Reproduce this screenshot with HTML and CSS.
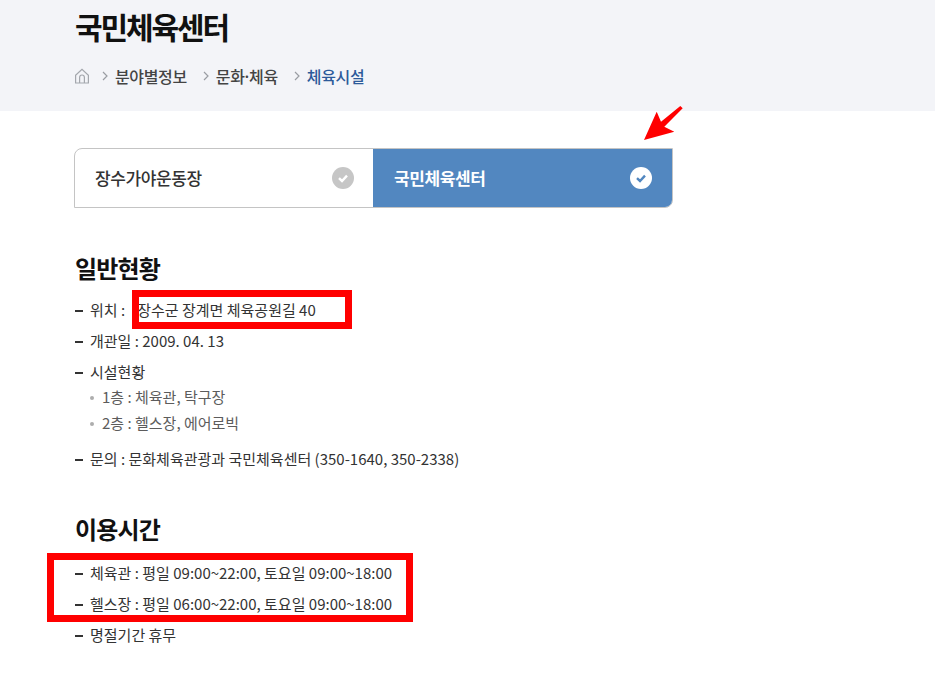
FILE: index.html
```html
<!DOCTYPE html>
<html lang="ko">
<head>
<meta charset="utf-8">
<title>국민체육센터</title>
<link rel="stylesheet" href="styles.css">
</head>
<body>
<header class="top">
  <div class="wrap">
    <h1 class="title">국민체육센터</h1>
    <nav class="crumbs">
      <svg class="home" width="16" height="16" viewBox="0 0 16 16" fill="none" stroke="#a4a7ad" stroke-width="1.2"><path d="M1.6 7.2 8 1.4l6.4 5.8V15H1.6z"/><path d="M5.6 15V9.4a2.4 2.4 0 0 1 4.8 0V15"/></svg>
      <svg class="sep" width="6" height="10" viewBox="0 0 6 10" fill="none" stroke="#9a9da3" stroke-width="1.2"><path d="m1 1 4 4-4 4"/></svg>
      <span class="crumb">분야별정보</span>
      <svg class="sep" width="6" height="10" viewBox="0 0 6 10" fill="none" stroke="#9a9da3" stroke-width="1.2"><path d="m1 1 4 4-4 4"/></svg>
      <span class="crumb">문화·체육</span>
      <svg class="sep" width="6" height="10" viewBox="0 0 6 10" fill="none" stroke="#9a9da3" stroke-width="1.2"><path d="m1 1 4 4-4 4"/></svg>
      <span class="crumb current">체육시설</span>
    </nav>
  </div>
</header>
<main class="wrap content">
  <div class="tabs">
    <div class="tab">
      <span>장수가야운동장</span>
      <svg width="22" height="22" viewBox="0 0 22 22"><circle cx="11" cy="11" r="11" fill="#c6c6c6"/><path d="m7 11.2 3 2.8 5-5.4" fill="none" stroke="#fff" stroke-width="2.4"/></svg>
    </div>
    <div class="tab active">
      <span>국민체육센터</span>
      <svg width="22" height="22" viewBox="0 0 22 22"><circle cx="11" cy="11" r="11" fill="#fff"/><path d="m7 11.2 3 2.8 5-5.4" fill="none" stroke="#5287c0" stroke-width="2.4"/></svg>
    </div>
  </div>

  <h2 class="heading">일반현황</h2>
  <ul class="list">
    <li class="item">위치 : &nbsp;&nbsp;<span class="address">장수군 장계면 체육공원길 40</span></li>
    <li class="item">개관일 : 2009. 04. 13</li>
    <li class="item">시설현황
      <ul class="sublist">
        <li class="subitem">1층 : 체육관, 탁구장</li>
        <li class="subitem">2층 : 헬스장, 에어로빅</li>
      </ul>
    </li>
    <li class="item">문의 : 문화체육관광과 국민체육센터 (350-1640, 350-2338)</li>
  </ul>

  <h2 class="heading second">이용시간</h2>
  <ul class="list list-hours">
    <li class="item">체육관 : 평일 09:00~22:00, 토요일 09:00~18:00</li>
    <li class="item">헬스장 : 평일 06:00~22:00, 토요일 09:00~18:00</li>
    <li class="item">명절기간 휴무</li>
  </ul>
</main>
<div class="mark mark-address"></div>
<div class="mark mark-hours"></div>
<svg class="arrow" width="42" height="38" viewBox="0 0 42 38"><path fill="#f00" d="M2 35 14.7 6.7l4.3 10L38.3 1l2.4 2.3-18.4 18.4 10 5z"/></svg>
</body>
</html>
```
FILE: styles.css
```css
* { box-sizing: border-box; }
html, body { margin: 0; padding: 0; }
body {
  position: relative;
  background: #fff;
  color: #333;
  font-family: "Noto Sans CJK KR", "Noto Sans", sans-serif;
  font-size: 15px;
  overflow: hidden;
  height: 673px;
}
ul { list-style: none; margin: 0; padding: 0; }
.wrap { margin-left: 74px; width: 599px; }
.top { background: #f3f4f8; height: 111px; }
.title {
  margin: 0;
  padding: 6px 0 0 1px;
  font-size: 30px;
  line-height: 40px;
  font-weight: 700;
  letter-spacing: -2.1px;
  color: #111;
}
.crumbs { display: flex; align-items: center; margin-top: 18px; height: 24px; }
.home { margin-right: 12px; }
.sep { margin-right: 7px; }
.crumb { font-size: 16px; font-weight: 500; color: #444; margin-right: 16px; letter-spacing: -0.35px; }
.crumb.current { color: #2c5a9a; margin-right: 0; }
.content { padding-top: 37px; }
.tabs {
  display: flex;
  height: 60px;
  border: 1px solid #c4c4c4;
  border-radius: 8px 0 8px 0;
  overflow: hidden;
}
.tab {
  flex: 1;
  display: flex;
  align-items: center;
  justify-content: space-between;
  padding: 0 20px;
  font-size: 17px;
  font-weight: 500;
  letter-spacing: -0.4px;
  color: #333;
}
.tab span { position: relative; top: -1px; }
.tab:first-child { flex: 0 0 298px; padding-right: 19px; }
.tab.active { background: #5287c0; color: #fff; font-weight: 700; padding-left: 21px; }
.heading {
  margin: 40px 0 0;
  padding-left: 1px;
  font-size: 24px;
  line-height: 40px;
  font-weight: 700;
  letter-spacing: -0.8px;
  color: #111;
}
.heading.second { margin-top: 35px; }
.list { margin-top: 6px; }
.list-hours { margin-top: 8px; }
.item {
  display: block;
  position: relative;
  padding-left: 16px;
  line-height: 31px;
  font-size: 15px;
  letter-spacing: 0;
  font-feature-settings: "locl" 0, "calt" 0, "ccmp" 0, "kern" 0;
}
.address { margin-left: 2px; }
.item::before {
  content: "";
  position: absolute;
  left: 1px;
  top: 16px;
  width: 8px;
  height: 2px;
  background: #333;
}
.sublist { padding-bottom: 7px; margin-top: -3px; }
.subitem {
  position: relative;
  padding-left: 12px;
  line-height: 26px;
  color: #5c5c5c;
}
.subitem::before {
  content: "";
  position: absolute;
  left: 0;
  top: 12px;
  width: 4px;
  height: 4px;
  border-radius: 50%;
  background: #adadad;
}
.mark { position: absolute; border: 7px solid #f00; }
.mark-address { left: 132px; top: 290px; width: 220px; height: 39px; }
.mark-hours { left: 47px; top: 553px; width: 366px; height: 69px; }
.arrow { position: absolute; left: 642px; top: 105px; }
```
